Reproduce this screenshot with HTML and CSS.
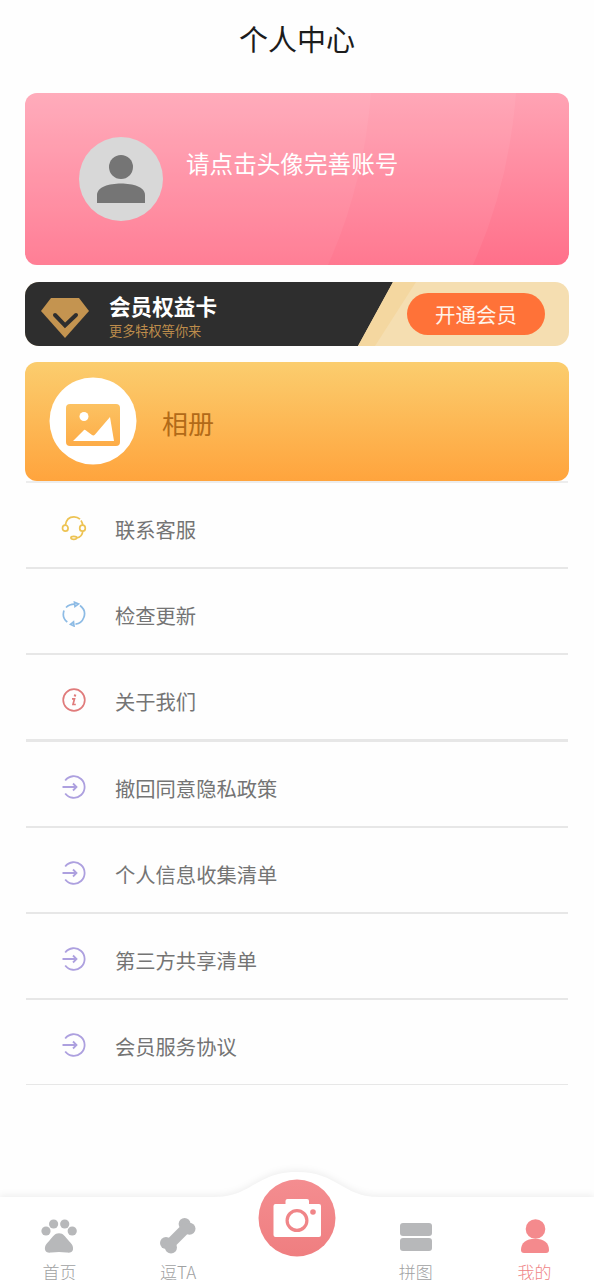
FILE: index.html
```html
<!DOCTYPE html>
<html lang="zh-CN">
<head>
<meta charset="utf-8">
<title>个人中心</title>
<link rel="stylesheet" href="styles.css">
</head>
<body>
<div class="page">
  <header class="header">个人中心</header>
  <main class="content">
    <section class="profile">
      <svg class="profile-bg" viewBox="0 0 544 172" preserveAspectRatio="none">
        <path d="M0 0H346Q339 92 303 172H0Z" fill="#fff" fill-opacity=".05"/>
        <path d="M0 0H491Q484 92 448 172H0Z" fill="#fff" fill-opacity=".06"/>
      </svg>
      <svg class="avatar" viewBox="0 0 84 84">
        <circle cx="42" cy="42" r="42" fill="#d8d8d8"/>
        <circle cx="42" cy="30" r="12" fill="#757575"/>
        <path d="M18 66V58C18 50 30 46.500 42 46.500S66 50 66 58V66Z" fill="#757575"/>
      </svg>
      <span class="profile-text">请点击头像完善账号</span>
    </section>
    <section class="vip">
      <svg class="vip-bg" viewBox="0 0 544 64">
        <path d="M0 0H368L333 64H0Z" fill="#2e2e2e"/>
        <path d="M368 0H391L350 64H333Z" fill="#f4d7a0"/>
      </svg>
      <svg class="gem" viewBox="0 0 48 40">
        <path d="M10 0H38L48 13 24 40 0 13Z" fill="#c49450"/>
        <path d="M14 17L24 27.500 35 17" fill="none" stroke="#2e2e2e" stroke-width="4" stroke-linecap="round"/>
      </svg>
      <div class="vip-copy">
        <div class="vip-title">会员权益卡</div>
        <div class="vip-sub">更多特权等你来</div>
      </div>
      <div class="vip-btn">开通会员</div>
    </section>
    <section class="album">
      <svg class="album-icon" viewBox="0 0 88 88">
        <defs><linearGradient id="ag" x1="0" y1="0" x2="0" y2="1"><stop offset="0" stop-color="#fcc262"/><stop offset="1" stop-color="#fdac47"/></linearGradient></defs>
        <circle cx="44" cy="44" r="43.500" fill="#fff"/>
        <rect x="17" y="27" width="54" height="42" rx="4" fill="url(#ag)"/>
        <circle cx="35" cy="39.500" r="4.500" fill="#fff"/>
        <path d="M24 64L35 53Q36 52.500 37 53.500L43 58Q44.500 59 46 57.500L61 40 65 64Z" fill="#fff"/>
      </svg>
      <span class="album-text">相册</span>
    </section>
    <nav class="list">
      <div class="row">
        <svg class="row-icon" viewBox="0 0 26 26" fill="none" stroke="#edc353" stroke-width="1.700">
          <path d="M4.200 10.500C5 5 8.500 1.800 13 1.800C15.500 1.800 17.500 2.800 19 4.200M20 5.500C21 7 21.600 8.500 21.800 10.500M21.800 16C21.500 20 19 22.500 15.500 22.800"/>
          <ellipse cx="4.300" cy="13.200" rx="2.800" ry="3"/><ellipse cx="21.500" cy="13.200" rx="2.800" ry="3"/><ellipse cx="12.800" cy="22.800" rx="2.900" ry="1.500"/>
        </svg>
        <span>联系客服</span>
      </div>
      <div class="row">
        <svg class="row-icon" viewBox="0 0 26 26" fill="none" stroke="#8dbbe5" stroke-width="1.700">
          <path d="M5 6.500C7 4.500 10 3.200 13.500 3.200M3 9.500C1.500 14 3 18.500 6.300 21M19 4.500C23 7.500 24.500 12 22.800 16.500C21.500 20 18.500 22.800 14.500 23.200"/>
          <path d="M13.500 1.200L17.500 3 14 5.500Z"/><path d="M12.500 20.800L9.500 23.300 13 25Z"/>
        </svg>
        <span>检查更新</span>
      </div>
      <div class="row row-section">
        <svg class="row-icon" viewBox="0 0 26 26" fill="none" stroke="#e07b7b">
          <circle cx="13" cy="13" r="10.800" stroke-width="1.700"/>
          <path d="M14.200 7.500L13.800 9.500" stroke-width="2.200"/><path d="M11 11.800H13.500L12 17.500H14.800" stroke-width="1.700"/>
        </svg>
        <span>关于我们</span>
      </div>
      <div class="row">
        <svg class="row-icon" viewBox="0 0 26 26" fill="none" stroke="#ada0df" stroke-width="1.800">
          <path d="M4.200 6.500A10.800 10.800 0 1 1 4.200 19.500M1.500 13H15.500M12 9.500L15.500 13 12 16.500"/>
        </svg>
        <span>撤回同意隐私政策</span>
      </div>
      <div class="row">
        <svg class="row-icon" viewBox="0 0 26 26" fill="none" stroke="#ada0df" stroke-width="1.800">
          <path d="M4.200 6.500A10.800 10.800 0 1 1 4.200 19.500M1.500 13H15.500M12 9.500L15.500 13 12 16.500"/>
        </svg>
        <span>个人信息收集清单</span>
      </div>
      <div class="row">
        <svg class="row-icon" viewBox="0 0 26 26" fill="none" stroke="#ada0df" stroke-width="1.800">
          <path d="M4.200 6.500A10.800 10.800 0 1 1 4.200 19.500M1.500 13H15.500M12 9.500L15.500 13 12 16.500"/>
        </svg>
        <span>第三方共享清单</span>
      </div>
      <div class="row row-last">
        <svg class="row-icon" viewBox="0 0 26 26" fill="none" stroke="#ada0df" stroke-width="1.800">
          <path d="M4.200 6.500A10.800 10.800 0 1 1 4.200 19.500M1.500 13H15.500M12 9.500L15.500 13 12 16.500"/>
        </svg>
        <span>会员服务协议</span>
      </div>
    </nav>
  </main>
  <footer class="tabbar">
    <svg class="tabbar-bg" viewBox="0 0 594 120">
      <path d="M0 37H215C252 37 256 12 297 12S342 37 379 37H594V130H0Z" fill="#fff"/>
    </svg>
    <div class="tab">
      <svg class="tab-icon" viewBox="0 0 36 36" fill="#b7b8ba">
        <circle cx="5" cy="13" r="4.600"/><circle cx="12.600" cy="6" r="4.600"/><circle cx="23.700" cy="6" r="4.600"/><circle cx="31.200" cy="13" r="4.600"/>
        <path d="M18 15.200C22.500 15.200 24 18.500 27.500 22.500C30.500 26 32.500 27.500 32 31.500C31.500 34.500 28.500 35 25.500 34.500Q18 33.500 10.500 34.500C7.500 35 4.500 34.500 4 31.500C3.500 27.500 5.500 26 8.500 22.500C12 18.500 13.500 15.200 18 15.200Z"/>
      </svg>
      <span>首页</span>
    </div>
    <div class="tab">
      <svg class="tab-icon" viewBox="0 0 36 36" fill="#b7b8ba">
        <circle cx="24.600" cy="6" r="6"/><circle cx="29.500" cy="10.800" r="6"/><circle cx="6" cy="25" r="6"/><circle cx="11" cy="29.500" r="6"/>
        <path d="M9 27L27 9" stroke="#b7b8ba" stroke-width="10.500"/>
      </svg>
      <span>逗TA</span>
    </div>
    <div class="tab tab-camera">
      <svg class="camera" viewBox="0 0 78 78">
        <defs><linearGradient id="cg" x1="0" y1="0" x2="0" y2="1"><stop offset="0" stop-color="#f48d90"/><stop offset="1" stop-color="#ef7e80"/></linearGradient></defs>
        <circle cx="39" cy="39" r="38.500" fill="url(#cg)"/>
        <path d="M17.500 25H27.500V22Q27.500 20 29.500 20H49Q51 20 51 22V25H61Q63 25 63 27V56Q63 58 61 58H17.500Q15.500 58 15.500 56V27Q15.500 25 17.500 25Z" fill="#fff"/>
        <circle cx="39" cy="41.500" r="9.900" fill="none" stroke="#f08588" stroke-width="3.200"/>
        <circle cx="55" cy="33" r="2.800" fill="#f08588"/>
      </svg>
    </div>
    <div class="tab">
      <svg class="tab-icon" viewBox="0 0 36 36" fill="#b7b8ba">
        <rect x="2" y="5" width="32" height="13" rx="3"/><rect x="2" y="20" width="32" height="13" rx="3"/>
      </svg>
      <span>拼图</span>
    </div>
    <div class="tab tab-active">
      <svg class="tab-icon" viewBox="0 0 36 36" fill="#f48a8d">
        <circle cx="18.500" cy="11" r="9.800"/>
        <path d="M4 32C4 25 9 20.800 18 20.800S32 25 32 32Q32 35 29 35H7Q4 35 4 32Z"/>
      </svg>
      <span>我的</span>
    </div>
  </footer>
</div>
</body>
</html>
```
FILE: styles.css
```css
* { box-sizing: border-box; }
body {
  margin: 0;
  background: #fefefe;
  font-family: "Noto Sans CJK SC", sans-serif;
}
.page {
  width: 594px;
  height: 1280px;
  display: flex;
  flex-direction: column;
  overflow: hidden;
}
.header {
  height: 93px;
  padding-top: 16px;
  text-align: center;
  font-size: 29px;
  line-height: 44px;
  color: #1c1c1c;
}
.content {
  flex: 1;
  padding: 0 25px;
}
.profile {
  position: relative;
  height: 172px;
  border-radius: 12px;
  overflow: hidden;
  background: linear-gradient(#ffa3b4, #ff708a);
  display: flex;
  padding: 43.5px 54px;
  gap: 24px;
}
.profile-bg, .vip-bg {
  position: absolute;
  inset: 0;
  width: 100%;
  height: 100%;
}
.avatar {
  position: relative;
  width: 84px;
  height: 84px;
}
.profile-text {
  position: relative;
  margin-left: -1px;
  font-size: 23.6px;
  line-height: 53px;
  color: #fff;
}
.vip {
  position: relative;
  height: 64px;
  margin-top: 17px;
  border-radius: 14px;
  overflow: hidden;
  background: #f5deb1;
  display: flex;
  align-items: center;
  padding: 0 24px 0 16px;
}
.gem {
  position: relative;
  width: 48px;
  height: 40px;
  margin-top: 7px;
}
.vip-copy {
  position: relative;
  margin-left: 20px;
  padding-top: 5px;
  flex: 1;
}
.vip-title {
  font-size: 21.6px;
  line-height: 28px;
  font-weight: 700;
  color: #fff;
}
.vip-sub {
  font-size: 13.2px;
  line-height: 21px;
  color: #bd8c4b;
}
.vip-btn {
  position: relative;
  width: 138px;
  height: 42px;
  border-radius: 21px;
  background: #ff7238;
  color: #fff3e8;
  font-size: 20.5px;
  line-height: 42px;
  text-align: center;
}
.album {
  height: 119px;
  margin-top: 16px;
  border-radius: 12px;
  background: linear-gradient(#fbcd6e, #ffa43d);
  display: flex;
  padding: 15px 24px;
  gap: 25px;
}
.album-icon {
  width: 88px;
  height: 88px;
}
.album-text {
  font-size: 26px;
  line-height: 92px;
  color: #b26a18;
}
.list {
  margin: 0 1px;
  border-top: 2px solid #ededed;
}
.row {
  height: 86px;
  padding: 8px 0 0 35px;
  border-bottom: 2px solid #e7e7e7;
  display: flex;
  align-items: center;
  gap: 28px;
  font-size: 20.3px;
  color: #747474;
}
.row-section {
  height: 87px;
  border-bottom-width: 3px;
}
.row-last {
  height: 85px;
  border-bottom-width: 1px;
}
.row-icon {
  width: 26px;
  height: 26px;
  margin-top: -2px;
}
.tabbar {
  position: relative;
  height: 120px;
  display: grid;
  grid-template-columns: repeat(5, 1fr);
}
.tabbar-bg {
  position: absolute;
  inset: 0;
  width: 594px;
  height: 120px;
  filter: drop-shadow(0 -2px 3px rgba(0, 0, 0, 0.06));
}
.tab {
  position: relative;
  display: flex;
  flex-direction: column;
  align-items: center;
  padding-top: 58px;
  font-size: 17px;
  line-height: 16px;
  font-weight: 300;
  color: #a0a1a2;
}
.tab-icon {
  width: 36px;
  height: 36px;
  margin-bottom: 10px;
}
.tab-camera { padding-top: 19px; }
.camera {
  width: 78px;
  height: 78px;
}
.tab-active { color: #ef8587; }
```
